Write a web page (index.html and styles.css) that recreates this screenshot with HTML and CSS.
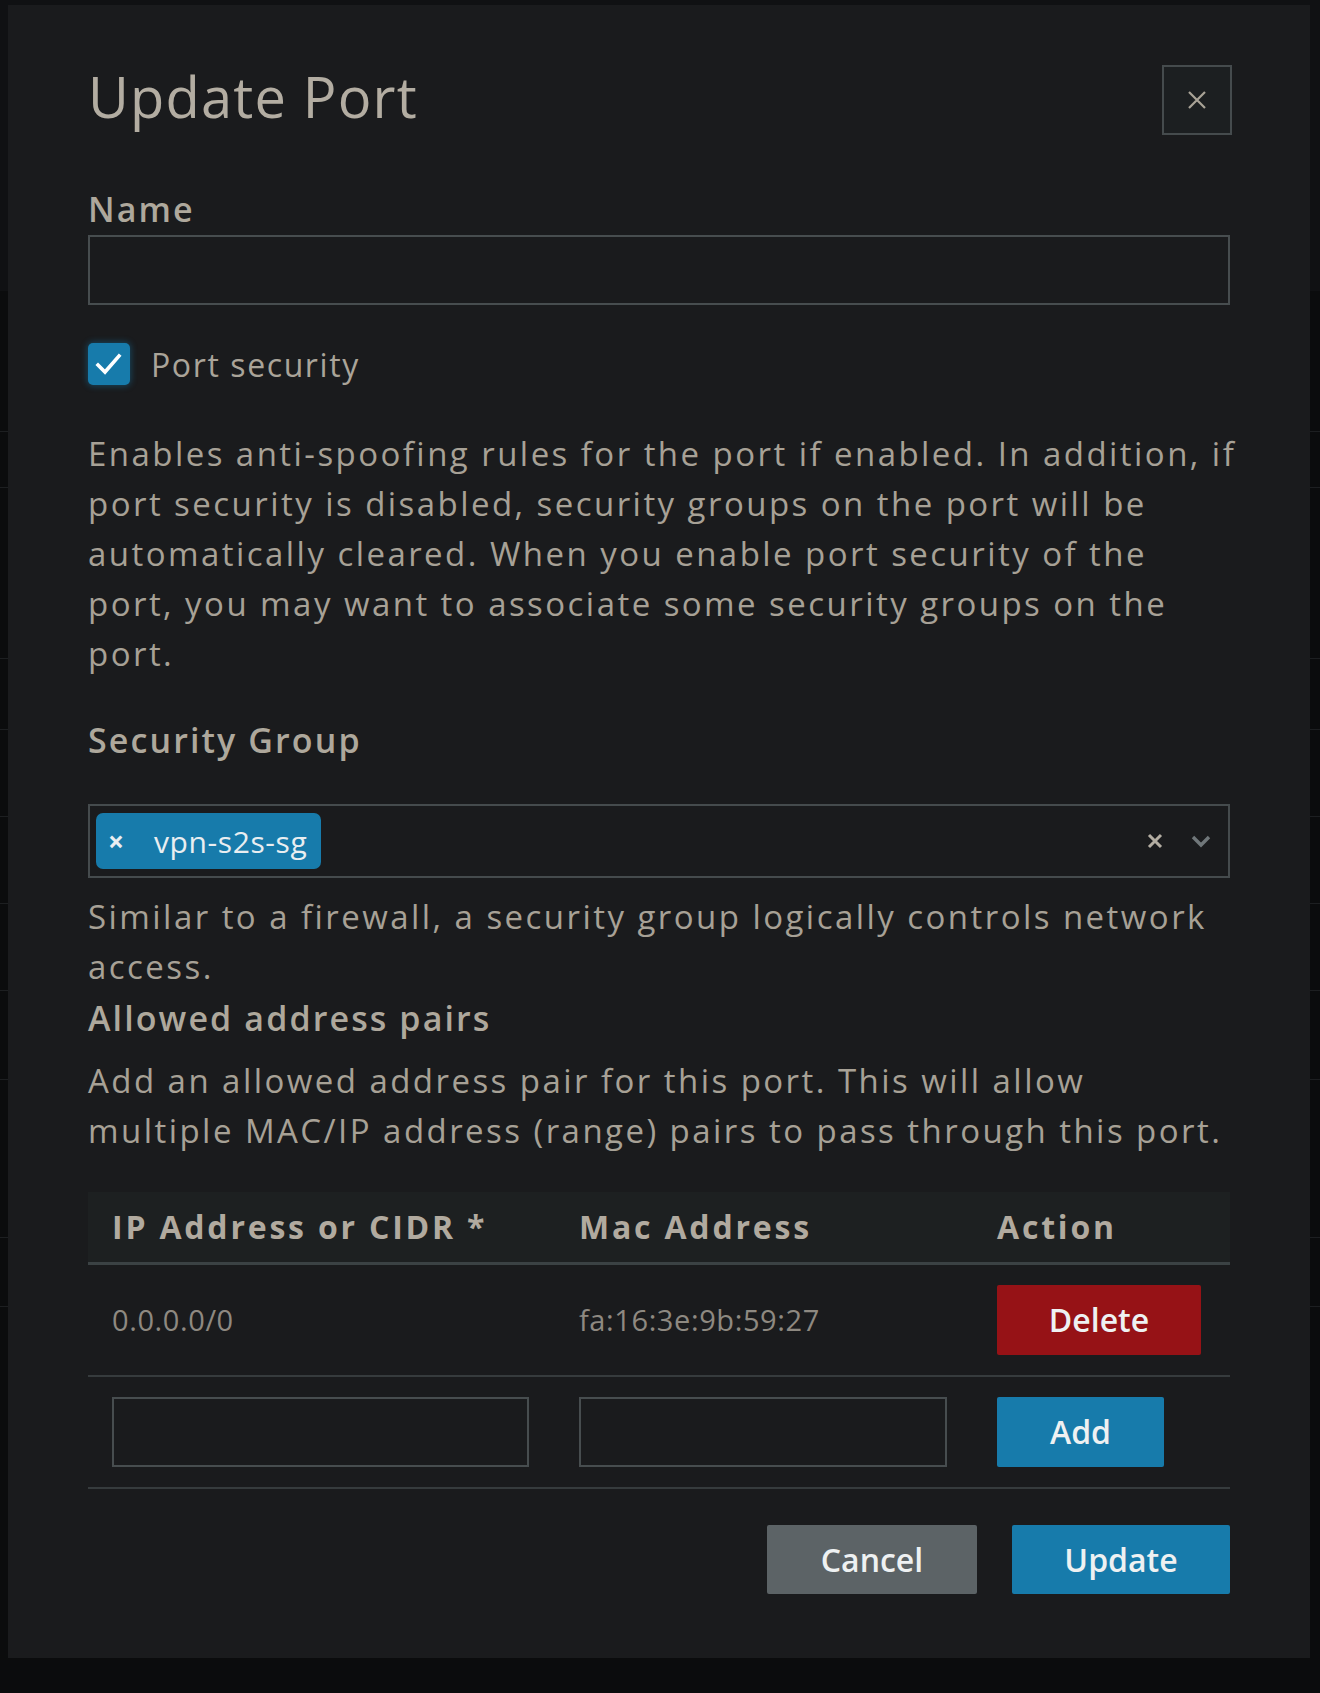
FILE: index.html
```html
<!DOCTYPE html>
<html lang="en">
<head>
<meta charset="utf-8">
<title>Update Port</title>
<link rel="stylesheet" href="styles.css">
</head>
<body>
<div class="backdrop">
  <div class="bd-head"></div>
  <div class="bd-row r1"></div>
  <div class="bd-row r2"></div>
  <div class="bd-row r3"></div>
  <div class="bd-row r4"></div>
  <div class="bd-row r5"></div>
  <div class="bd-row r6"></div>
  <div class="bd-row r7"></div>
  <div class="bd-row r8"></div>
  <div class="bd-row r9"></div>
  <div class="bd-row r10"></div>
</div>

<div class="modal" role="dialog">
  <div class="modal-header">
    <h2 class="modal-title">Update Port</h2>
    <button class="close-btn" aria-label="Close">
      <svg width="20" height="20" viewBox="0 0 20 20"><path d="M2 2L18 18M18 2L2 18" stroke="#a9a397" stroke-width="2.2" fill="none"/></svg>
    </button>
  </div>

  <label class="field-label first">Name</label>
  <div class="text-input"></div>

  <div class="check-row">
    <span class="checkbox">
      <svg width="42" height="42" viewBox="0 0 42 42"><path d="M10 22L17 29L31 13" stroke="#ffffff" stroke-width="3.6" fill="none" stroke-linecap="square"/></svg>
    </span>
    <span class="check-text">Port security</span>
  </div>

  <p class="para p-port">Enables anti-spoofing rules for the port if enabled. In addition, if<br>port security is disabled, security groups on the port will be<br>automatically cleared. When you enable port security of the<br>port, you may want to associate some security groups on the<br>port.</p>

  <label class="field-label sg-label">Security Group</label>
  <div class="select-box">
    <span class="tag"><span class="tag-x">×</span><span class="tag-text">vpn-s2s-sg</span></span>
    <span class="select-icons">
      <svg class="clear-ico" width="16" height="16" viewBox="0 0 16 16"><path d="M2 2L14 14M14 2L2 14" stroke="#b4aea3" stroke-width="3" fill="none"/></svg>
      <svg class="chev-ico" width="20" height="14" viewBox="0 0 20 14"><path d="M2 3L10 11L18 3" stroke="#70777a" stroke-width="3.4" fill="none"/></svg>
    </span>
  </div>
  <p class="para help">Similar to a firewall, a security group logically controls network<br>access.</p>

  <h3 class="field-label pairs-label">Allowed address pairs</h3>
  <p class="para help">Add an allowed address pair for this port. This will allow<br>multiple MAC/IP address (range) pairs to pass through this port.</p>

  <table class="pairs">
    <colgroup><col class="c1"><col class="c2"><col class="c3"></colgroup>
    <thead>
      <tr><th>IP Address or CIDR *</th><th>Mac Address</th><th>Action</th></tr>
    </thead>
    <tbody>
      <tr>
        <td class="muted">0.0.0.0/0</td>
        <td class="muted">fa:16:3e:9b:59:27</td>
        <td><button class="btn btn-danger">Delete</button></td>
      </tr>
      <tr>
        <td><div class="cell-input ip"></div></td>
        <td><div class="cell-input mac"></div></td>
        <td><button class="btn btn-primary btn-add">Add</button></td>
      </tr>
    </tbody>
  </table>

  <div class="modal-footer">
    <button class="btn btn-cancel">Cancel</button>
    <button class="btn btn-primary btn-update">Update</button>
  </div>
</div>
</body>
</html>
```

FILE: styles.css
```css
* { box-sizing: border-box; }

html, body {
  margin: 0;
  padding: 0;
}

body {
  width: 1320px;
  height: 1693px;
  background: #0b0c0d;
  font-family: "Open Sans", "Liberation Sans", sans-serif;
  position: relative;
  overflow: hidden;
}

/* page behind the dialog */
.backdrop {
  width: 100%;
}
.bd-head {
  height: 291px;
  background: #101113;
}
.bd-row {
  border-bottom: 1px solid #1d1f21;
}
.r1 { height: 141px; }
.r2 { height: 56px; }
.r3 { height: 171px; }
.r4 { height: 71px; }
.r5 { height: 87px; }
.r6 { height: 87px; }
.r7 { height: 87px; }
.r8 { height: 89px; }
.r9 { height: 158px; }
.r10 { height: 69px; }

/* dialog */
.modal {
  position: absolute;
  left: 8px;
  top: 5px;
  width: 1302px;
  height: 1653px;
  background: #1a1b1d;
  padding: 60px 80px 64px;
  color: #aaa499;
}

.modal-header {
  display: flex;
  justify-content: space-between;
  align-items: flex-start;
  height: 70px;
}

.modal-title {
  margin: 0;
  font-size: 56px;
  line-height: 62px;
  font-weight: 400;
  color: #b3ada2;
  letter-spacing: 1.2px;
}

.close-btn {
  width: 70px;
  height: 70px;
  margin-right: -2px;
  border: 2px solid #454b4d;
  background: #1c1f21;
  display: flex;
  align-items: center;
  justify-content: center;
  padding: 0;
}

.field-label {
  display: block;
  margin: 0;
  font-size: 34px;
  line-height: 48px;
  font-weight: 600;
  color: #aea89c;
  letter-spacing: 2.1px;
}
.field-label.first { margin-top: 50px; }
.sg-label { margin-top: 37px; }
.pairs-label { margin-top: 2px; }

.text-input {
  margin-top: 2px;
  height: 70px;
  border: 2px solid #474d4f;
}

.check-row {
  margin-top: 38px;
  display: flex;
  align-items: center;
  height: 42px;
}
.checkbox {
  width: 42px;
  height: 42px;
  border-radius: 5px;
  background: #177bab;
  box-shadow: 0 0 6px 1px rgba(23, 123, 171, 0.45);
  display: block;
}
.checkbox svg { display: block; }
.check-text {
  margin-left: 21px;
  font-size: 32px;
  letter-spacing: 1.6px;
  color: #aaa499;
}

.para {
  margin: 0;
  font-size: 33px;
  line-height: 50px;
  letter-spacing: 2.45px;
  color: #a7a196;
  white-space: nowrap;
}
.p-port { margin-top: 44px; }
.help { margin-top: 14px; }

.select-box {
  margin-top: 40px;
  height: 74px;
  border: 2px solid #454b4d;
  display: flex;
  align-items: center;
  justify-content: space-between;
  padding: 0 17px 0 6px;
}
.tag {
  height: 56px;
  width: 225px;
  border-radius: 7px;
  background: #177bab;
  display: flex;
  align-items: center;
  color: #e9eef1;
}
.tag-x {
  font-size: 28px;
  font-weight: 700;
  margin-left: 12px;
  width: 16px;
  line-height: 1;
}
.tag-text {
  margin-left: 30px;
  font-size: 30px;
  letter-spacing: 0.6px;
}
.select-icons {
  display: flex;
  align-items: center;
  gap: 28px;
}
.select-icons svg { display: block; }

.pairs {
  margin-top: 36px;
  width: 100%;
  border-collapse: collapse;
  table-layout: fixed;
}
.c1 { width: 467px; }
.c2 { width: 418px; }
.c3 { width: 257px; }

.pairs th {
  height: 71px;
  background: #1d2021;
  border-bottom: 3px solid #3b4244;
  text-align: left;
  padding: 0 24px;
  font-size: 32px;
  font-weight: 700;
  letter-spacing: 2.8px;
  color: #b1aa9f;
}
.pairs td {
  padding: 20px 24px;
  border-bottom: 2px solid #363b3d;
  height: 112px;
  vertical-align: middle;
}
.pairs td.muted {
  font-size: 29px;
  color: #8e8981;
  letter-spacing: 0.6px;
}

.cell-input {
  height: 70px;
  border: 2px solid #474d4f;
}
.cell-input.ip { width: 417px; }
.cell-input.mac { width: 368px; }

.btn {
  border: 0;
  border-radius: 2px;
  height: 70px;
  font-family: "Open Sans", "Liberation Sans", sans-serif;
  font-size: 32px;
  font-weight: 600;
  color: #eef1f2;
  padding: 0;
  display: block;
}
.btn-danger {
  width: 204px;
  background: #961216;
}
.btn-primary {
  background: #177bab;
}
.btn-add { width: 167px; }

.modal-footer {
  margin-top: 36px;
  display: flex;
  justify-content: flex-end;
  gap: 35px;
}
.btn-cancel {
  width: 210px;
  height: 69px;
  background: #5c6366;
}
.btn-update {
  width: 218px;
  height: 69px;
}
```
